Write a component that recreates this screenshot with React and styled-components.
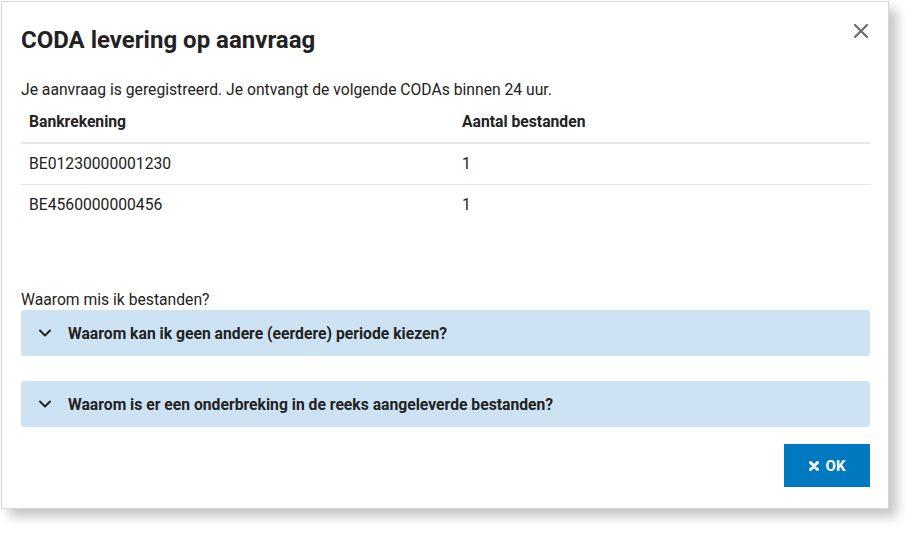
import React from 'react';
import styled, { createGlobalStyle } from 'styled-components';

const GlobalStyle = createGlobalStyle`
    body {
        margin: 0;
        background: #ffffff;
        font-family: Roboto, "Noto Sans", sans-serif;
        color: #222222;
    }
`;

const Page = styled.div`
    padding: 1px;
    width: 913px;
    height: 533px;
    box-sizing: border-box;
`;

const Modal = styled.div`
    width: 888px;
    height: 508px;
    box-sizing: border-box;
    border: 1px solid #d6d6d6;
    background: #ffffff;
    box-shadow: 8px 8px 10px rgba(0, 0, 0, 0.22);
    padding: 22px 18px 20px 19px;
    display: flex;
    flex-direction: column;
`;

const Header = styled.div`
    display: flex;
    justify-content: space-between;
    align-items: flex-start;
`;

const Title = styled.h2`
    margin: 0;
    font-size: 24px;
    line-height: 32px;
    font-weight: 700;
    color: #222222;
`;

const CloseButton = styled.button`
    border: none;
    background: none;
    padding: 0;
    margin: -2px 0 0;
    width: 18px;
    height: 18px;
    display: flex;
    align-items: center;
    justify-content: center;
    cursor: pointer;
`;

const Intro = styled.p`
    margin: 24px 0 0;
    font-size: 15.7px;
    line-height: 20px;
    color: #222222;
`;

const Table = styled.table`
    width: 100%;
    border-collapse: collapse;
    margin-top: 4px;
    font-size: 15.7px;
`;

const Th = styled.th`
    text-align: left;
    font-weight: 700;
    padding: 8px 8px 10px;
    line-height: 20px;
    border-bottom: 2px solid #e6e6e6;
    width: ${p => p.$width || 'auto'};
`;

const Td = styled.td`
    padding: 10px 8px;
    line-height: 20px;
    border-top: ${p => (p.$first ? 'none' : '1px solid #e6e6e6')};
`;

const Question = styled.div`
    margin-top: 65px;
    font-size: 15.7px;
    line-height: 20px;
`;

const AccordionList = styled.div`
    display: flex;
    flex-direction: column;
    gap: 25px;
`;

const AccordionItem = styled.button`
    display: flex;
    align-items: center;
    gap: 16px;
    height: 46px;
    width: 100%;
    border: none;
    border-radius: 3px;
    background: #cde3f3;
    padding: 0 17px;
    font-family: inherit;
    font-size: 15.7px;
    font-weight: 700;
    color: #222222;
    text-align: left;
    cursor: pointer;
`;

const Footer = styled.div`
    display: flex;
    justify-content: flex-end;
    margin-top: 17px;
`;

const OkButton = styled.button`
    display: flex;
    align-items: center;
    justify-content: center;
    gap: 7px;
    width: 86px;
    height: 43px;
    border: none;
    border-radius: 0;
    background: #0079c1;
    color: #ffffff;
    font-family: inherit;
    font-size: 15px;
    font-weight: 700;
    cursor: pointer;
`;

const Chevron = () => (
    <svg width="14" height="14" viewBox="0 0 14 14">
        <path d="M2 4.5 L7 9.5 L12 4.5" fill="none" stroke="#222" strokeWidth="2" strokeLinecap="round" strokeLinejoin="round" />
    </svg>
);

const CloseIcon = () => (
    <svg width="16" height="16" viewBox="0 0 16 16">
        <path d="M2 2 L14 14 M14 2 L2 14" stroke="#6b6b6b" strokeWidth="2.2" strokeLinecap="round" />
    </svg>
);

const TimesIcon = () => (
    <svg width="10" height="10" viewBox="0 0 10 10">
        <path d="M1.5 1.5 L8.5 8.5 M8.5 1.5 L1.5 8.5" stroke="#fff" strokeWidth="3" strokeLinecap="round" />
    </svg>
);

const rows = [
    { account: 'BE01230000001230', count: 1 },
    { account: 'BE4560000000456', count: 1 },
];

const questions = [
    'Waarom kan ik geen andere (eerdere) periode kiezen?',
    'Waarom is er een onderbreking in de reeks aangeleverde bestanden?',
];

export default function App() {
    return (
        <Page>
            <GlobalStyle />
            <Modal>
                <Header>
                    <Title>CODA levering op aanvraag</Title>
                    <CloseButton aria-label="Sluiten"><CloseIcon /></CloseButton>
                </Header>
                <Intro>Je aanvraag is geregistreerd. Je ontvangt de volgende CODAs binnen 24 uur.</Intro>
                <Table>
                    <thead>
                        <tr>
                            <Th $width="417px">Bankrekening</Th>
                            <Th>Aantal bestanden</Th>
                        </tr>
                    </thead>
                    <tbody>
                        {rows.map((r, i) => (
                            <tr key={r.account}>
                                <Td $first={i === 0}>{r.account}</Td>
                                <Td $first={i === 0}>{r.count}</Td>
                            </tr>
                        ))}
                    </tbody>
                </Table>
                <Question>Waarom mis ik bestanden?</Question>
                <AccordionList>
                    {questions.map(q => (
                        <AccordionItem key={q}>
                            <Chevron />
                            {q}
                        </AccordionItem>
                    ))}
                </AccordionList>
                <Footer>
                    <OkButton><TimesIcon />OK</OkButton>
                </Footer>
            </Modal>
        </Page>
    );
}
